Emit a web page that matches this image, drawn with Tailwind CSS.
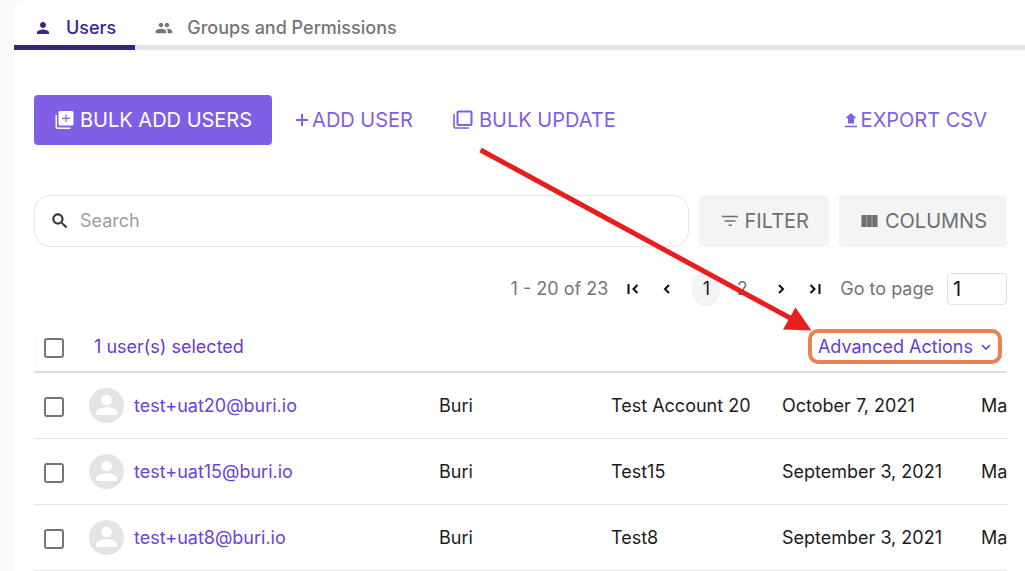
<!DOCTYPE html>
<html lang="en">

<head>
    <meta charset="UTF-8">
    <meta name="viewport" content="width=device-width, initial-scale=1.0">
    <title>Users</title>
    <script src="https://cdn.jsdelivr.net/npm/@tailwindcss/browser@4"></script>
</head>

<body class="relative bg-[#fafafa] font-['Inter',sans-serif] text-lg text-[#1c1c1c] overflow-hidden">
    <main class="ml-[14px] min-h-screen bg-white rounded-tl-xl">

        <!-- Tabs -->
        <nav class="flex h-[50px] font-medium shadow-[inset_0_-5px_0_#e4e4e4]">
            <a href="#users" class="flex items-center gap-[14px] pl-5 pr-[19px] pt-[10px] border-b-[5px] border-[#3d1f8f] text-[#3d1f8f]">
                <svg class="size-[18px]" viewBox="0 0 24 24" fill="currentColor"><path d="M12 12c2.21 0 4-1.79 4-4s-1.79-4-4-4-4 1.79-4 4 1.79 4 4 4zm0 2c-2.67 0-8 1.34-8 4v2h16v-2c0-2.66-5.33-4-8-4z"/></svg>
                Users
            </a>
            <a href="#groups" class="flex items-center gap-[14px] pl-5 pr-[19px] pt-[10px] border-b-[5px] border-[#e4e4e4] text-[#757575]">
                <svg class="size-[18px]" viewBox="0 0 24 24" fill="currentColor"><path d="M16 11c1.66 0 2.99-1.34 2.99-3S17.66 5 16 5c-1.66 0-3 1.34-3 3s1.34 3 3 3zm-8 0c1.66 0 2.99-1.34 2.99-3S9.66 5 8 5C6.34 5 5 6.34 5 8s1.34 3 3 3zm0 2c-2.33 0-7 1.17-7 3.5V19h14v-2.5c0-2.33-4.67-3.5-7-3.5zm8 0c-.29 0-.62.02-.97.05 1.16.84 1.97 1.97 1.97 3.45V19h6v-2.5c0-2.33-4.67-3.5-7-3.5z"/></svg>
                Groups and Permissions
            </a>
        </nav>

        <div class="pl-5 pr-[18px] pt-[45px]">

            <!-- Toolbar -->
            <div class="flex h-[50px] text-xl text-[#7f5fe6]">
                <button class="flex items-center gap-1 px-5 mr-1 rounded bg-[#7f5fe6] text-white">
                    <svg class="size-[22px]" viewBox="0 0 22 22" fill="currentColor"><path fill-rule="evenodd" d="M6 2h12a1.500 1.500 0 0 1 1.500 1.500v11.500a1.500 1.500 0 0 1-1.500 1.500H6a1.500 1.500 0 0 1-1.500-1.500V3.500A1.500 1.500 0 0 1 6 2zm5.400 3.500v3.200H8v1.200h3.400v3.200h1.200V9.900H16V8.700h-3.400V5.500z"/><path d="M1.500 6H3v11.500a1 1 0 0 0 1 1h12.500V20H3.500a2 2 0 0 1-2-2z"/></svg>
                    BULK ADD USERS
                </button>
                <button class="flex items-center gap-1 px-5">
                    <svg class="size-3" viewBox="0 0 12 12" stroke="currentColor" stroke-width="2"><path d="M6 0v12M0 6h12"/></svg>
                    ADD USER
                </button>
                <button class="flex items-center gap-1 px-5">
                    <svg class="size-[22px]" viewBox="0 0 22 22" fill="none" stroke="currentColor"><rect x="4.500" y="2.500" width="14" height="13.500" rx="1" stroke-width="2"/><path d="M1 5v12.500a1.500 1.500 0 0 0 1.500 1.500H16" stroke-width="1.600"/></svg>
                    BULK UPDATE
                </button>
                <button class="flex items-center gap-1 px-5 ml-auto">
                    <svg class="w-3 h-[15px]" viewBox="0 0 12 15" fill="currentColor"><path d="M6 0l5.500 5.200H9V10.500H3V5.200H.5zM0 12.800h12V14.200H0z"/></svg>
                    EXPORT CSV
                </button>
            </div>

            <!-- Search and filters -->
            <div class="flex gap-[10px] h-[52px] mt-[50px] text-xl text-[#6f6f6f]">
                <label class="flex flex-1 items-center gap-[10px] px-[15px] rounded-2xl border border-[#e4e4e4] text-lg">
                    <svg class="size-5 shrink-0 text-[#333]" viewBox="0 0 24 24" fill="currentColor" stroke="currentColor" stroke-width=".5"><path d="M15.500 14h-.79l-.28-.27C15.410 12.590 16 11.110 16 9.500 16 5.910 13.090 3 9.500 3S3 5.910 3 9.500 5.910 16 9.500 16c1.610 0 3.090-.59 4.230-1.570l.27.28v.79l5 4.990L20.490 19l-4.990-5zm-6 0C7.010 14 5 11.990 5 9.500S7.010 5 9.500 5 14 7.010 14 9.500 11.990 14 9.500 14z"/></svg>
                    <input type="search" placeholder="Search" aria-label="Search" class="w-full outline-none placeholder:text-[#9e9e9e]">
                </label>
                <button class="flex items-center gap-1 px-5 rounded bg-[#f4f4f4]">
                    <svg class="size-[22px]" viewBox="0 0 22 22" stroke="currentColor" stroke-width="1.600"><path d="M3 6.500h16M5.500 11h11M9.500 15.200h3.500"/></svg>
                    FILTER
                </button>
                <button class="flex items-center gap-1 px-5 rounded bg-[#f4f4f4]">
                    <svg class="size-[22px]" viewBox="0 0 22 22" fill="currentColor"><path d="M3 5h4.700v12H3a.5.5 0 0 1-.5-.5v-11A.5.5 0 0 1 3 5zM8.100 5h4.700v12H8.100zM13.200 5H18a.5.5 0 0 1 .5.5v11a.5.5 0 0 1-.5.5h-4.800z"/></svg>
                    COLUMNS
                </button>
            </div>

            <!-- Pagination -->
            <div class="flex items-center justify-end gap-4 h-8 mt-[26px] text-[#757575]">
                <span>1 - 20 of 23</span>
                <button aria-label="First page" class="text-[#111]">
                    <svg class="size-[18px]" viewBox="0 0 18 18" fill="none" stroke="currentColor" stroke-width="2"><path d="M4.500 4v10M13.500 5L9.500 9l4 4"/></svg>
                </button>
                <button aria-label="Previous page" class="text-[#111]">
                    <svg class="size-[18px]" viewBox="0 0 18 18" fill="none" stroke="currentColor" stroke-width="2"><path d="M11 5L7 9l4 4"/></svg>
                </button>
                <div class="flex gap-2">
                    <button class="w-7 h-[34px] rounded-full bg-[#f4f4f4] text-[#1c1c1c]">1</button>
                    <button class="w-7 h-[34px]">2</button>
                </div>
                <button aria-label="Next page" class="text-[#111]">
                    <svg class="size-[18px]" viewBox="0 0 18 18" fill="none" stroke="currentColor" stroke-width="2"><path d="M7 5l4 4-4 4"/></svg>
                </button>
                <button aria-label="Last page" class="text-[#111]">
                    <svg class="size-[18px]" viewBox="0 0 18 18" fill="none" stroke="currentColor" stroke-width="2"><path d="M4.500 5l4 4-4 4M13.500 4v10"/></svg>
                </button>
                <div class="flex items-center gap-[13px]">
                    <label for="page">Go to page</label>
                    <input id="page" type="text" value="1" class="w-15 h-8 px-[5px] rounded border border-[#e0e0e0] text-xl text-[#111]">
                </div>
            </div>

            <!-- Selection bar -->
            <div class="flex items-start h-10 mt-7 pl-[10px] pr-1 border-x border-x-[#fafafa] border-b-2 border-b-[#dcdcdc] text-[#673ad0]">
                <input type="checkbox" aria-label="Select all users" class="appearance-none size-5 mt-[5px] -ml-px rounded-[3px] border-2 border-[#757575] checked:bg-[#7f5fe6]">
                <span class="ml-[30px]">1 user(s) selected</span>
                <button class="flex items-center gap-[5px] h-[35px] ml-auto -mt-1 pl-[6px] pr-1 rounded-[10px] border-4 border-[#ee7f51]">
                    Advanced Actions
                    <svg class="size-4" viewBox="0 0 16 16" fill="none" stroke="currentColor" stroke-width="1.600"><path d="M4 6l4 4 4-4"/></svg>
                </button>
            </div>

            <!-- Users -->
            <div class="overflow-hidden">
                <table class="table-fixed w-full border-separate border-spacing-0 whitespace-nowrap [&_td]:h-[66px] [&_td]:border-b [&_td]:border-[#e4e4e4]">
                    <colgroup>
                        <col class="w-[55px]">
                        <col>
                        <col class="w-[172px]">
                        <col class="w-[171px]">
                        <col class="w-[199px]">
                        <col class="w-[26px]">
                    </colgroup>
                    <tbody id="users"></tbody>
                </table>
            </div>
        </div>
    </main>

    <!-- Arrow pointing at Advanced Actions -->
    <svg class="absolute left-[476px] top-[144px] w-[340px] h-[192px] pointer-events-none" viewBox="476 144 340 192" fill="#e81e1e"><path d="M480.500 150L792 319" stroke="#e81e1e" stroke-width="5"/><path d="M811.500 330.500L795.500 307.500 783 329.500z"/></svg>

    <script>
        const users = [
            { email: 'test+uat20@buri.io', company: 'Buri', name: 'Test Account 20', date: 'October 7, 2021', last: 'Ma' },
            { email: 'test+uat15@buri.io', company: 'Buri', name: 'Test15', date: 'September 3, 2021', last: 'Ma' },
            { email: 'test+uat8@buri.io', company: 'Buri', name: 'Test8', date: 'September 3, 2021', last: 'Ma' },
        ];

        document.getElementById('users').innerHTML = users.map(user => `
            <tr>
                <td class="pl-[10px]">
                    <input type="checkbox" aria-label="Select ${user.email}" class="block appearance-none size-5 mt-[2px] rounded-[3px] border-2 border-[#757575] checked:bg-[#7f5fe6]">
                </td>
                <td>
                    <a href="#${user.name}" class="flex items-center gap-[10px] text-[#6b42dc]">
                        <svg class="size-[35px]" viewBox="0 0 35 35"><circle cx="17.500" cy="17.500" r="17.500" fill="#e4e4e4"/><g fill="#fff"><circle cx="17.500" cy="12" r="5.300"/><path d="M7 27v-2.500c0-3.500 6-5.200 10.500-5.200S28 21 28 24.500V27z"/></g></svg>
                        ${user.email}
                    </a>
                </td>
                <td>${user.company}</td>
                <td>${user.name}</td>
                <td>${user.date}</td>
                <td>${user.last}</td>
            </tr>`).join('');
    </script>
</body>

</html>
